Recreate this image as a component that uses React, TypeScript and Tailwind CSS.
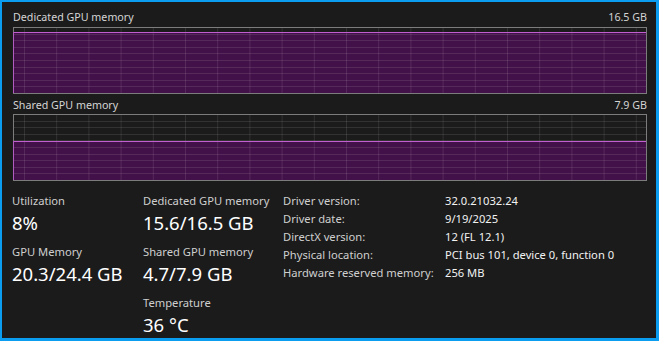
const FONT = "font-['Noto_Sans','Open_Sans',sans-serif]";

function MemChart({ used, total }: { used: number; total: number }) {
  const W = 634;
  const H = 67;
  const fillTop = Math.round(H - 1 - (used / total) * (H - 2));
  const cols = Array.from({ length: 20 }, (_, i) => 11.5 + i * 32.2);
  const rows = Array.from({ length: 9 }, (_, i) => Math.round((i + 1) * 6.6) + 0.5);
  return (
    <svg viewBox={`0 0 ${W} ${H}`} width={W} height={H} className="block">
      <rect x={0} y={0} width={W} height={H} fill="#1b1b1b" />
      <rect x={1} y={fillTop} width={W - 2} height={H - 1 - fillTop} fill="#431149" />
      {cols.map((x) => (
        <line key={x} x1={x} y1={1} x2={x} y2={H - 1} stroke="#ffffff" strokeOpacity={0.1} />
      ))}
      {rows.map((y) => (
        <line key={y} x1={1} y1={y} x2={W - 1} y2={y} stroke="#ffffff" strokeOpacity={0.1} />
      ))}
      <line x1={1} y1={fillTop + 0.5} x2={W - 1} y2={fillTop + 0.5} stroke="#c15fd0" />
      <rect x={0.5} y={0.5} width={W - 1} height={H - 1} fill="none" stroke="#7c7c7c" />
      <line x1={0.5} y1={fillTop} x2={0.5} y2={H - 1} stroke="#b05cc0" />
    </svg>
  );
}

function Stat({ label, value }: { label: string; value: string }) {
  return (
    <div className="flex flex-col">
      <div className="h-[16px] leading-[16px] text-[11.2px] text-[#cfcfcf]">{label}</div>
      <div className="h-[28px] leading-[28px] text-[18.5px] text-white">{value}</div>
    </div>
  );
}

const DETAILS: [string, string][] = [
  ["Driver version:", "32.0.21032.24"],
  ["Driver date:", "9/19/2025"],
  ["DirectX version:", "12 (FL 12.1)"],
  ["Physical location:", "PCI bus 101, device 0, function 0"],
  ["Hardware reserved memory:", "256 MB"],
];

export default function App() {
  return (
    <div className={`${FONT} w-[659px] h-[341px] bg-[#1b1b1b] border-l-2 border-t-2 border-r-[3px] border-b-[3px] border-[#0b9ef0] overflow-hidden`}>
      <div className="pl-[11px] pr-[9px] pt-[7px]">
        <div className="flex justify-between h-[16px] leading-[16px] text-[10.7px] text-[#d4d4d4]">
          <span>Dedicated GPU memory</span>
          <span>16.5 GB</span>
        </div>
        <div className="mt-[2px]">
          <MemChart used={15.6} total={16.5} />
        </div>
        <div className="flex justify-between h-[16px] leading-[16px] text-[10.7px] text-[#d4d4d4] mt-[3px]">
          <span>Shared GPU memory</span>
          <span>7.9 GB</span>
        </div>
        <div className="mt-[1px]">
          <MemChart used={4.7} total={7.9} />
        </div>
      </div>

      <div className="flex pt-[12px]">
        <div className="w-[141px] pl-[10px] flex flex-col gap-[7px]">
          <Stat label="Utilization" value="8%" />
          <Stat label="GPU Memory" value="20.3/24.4 GB" />
        </div>
        <div className="w-[140px] flex flex-col gap-[7px]">
          <Stat label="Dedicated GPU memory" value="15.6/16.5 GB" />
          <Stat label="Shared GPU memory" value="4.7/7.9 GB" />
          <Stat label="Temperature" value="36 °C" />
        </div>
        <div className="flex flex-col -mt-px">
          {DETAILS.map(([k, v]) => (
            <div key={k} className="flex h-[18px] leading-[18px] text-[11.2px]">
              <span className="w-[162px] text-[#cfcfcf]">{k}</span>
              <span className="text-[#f2f2f2]">{v}</span>
            </div>
          ))}
        </div>
      </div>
    </div>
  );
}
